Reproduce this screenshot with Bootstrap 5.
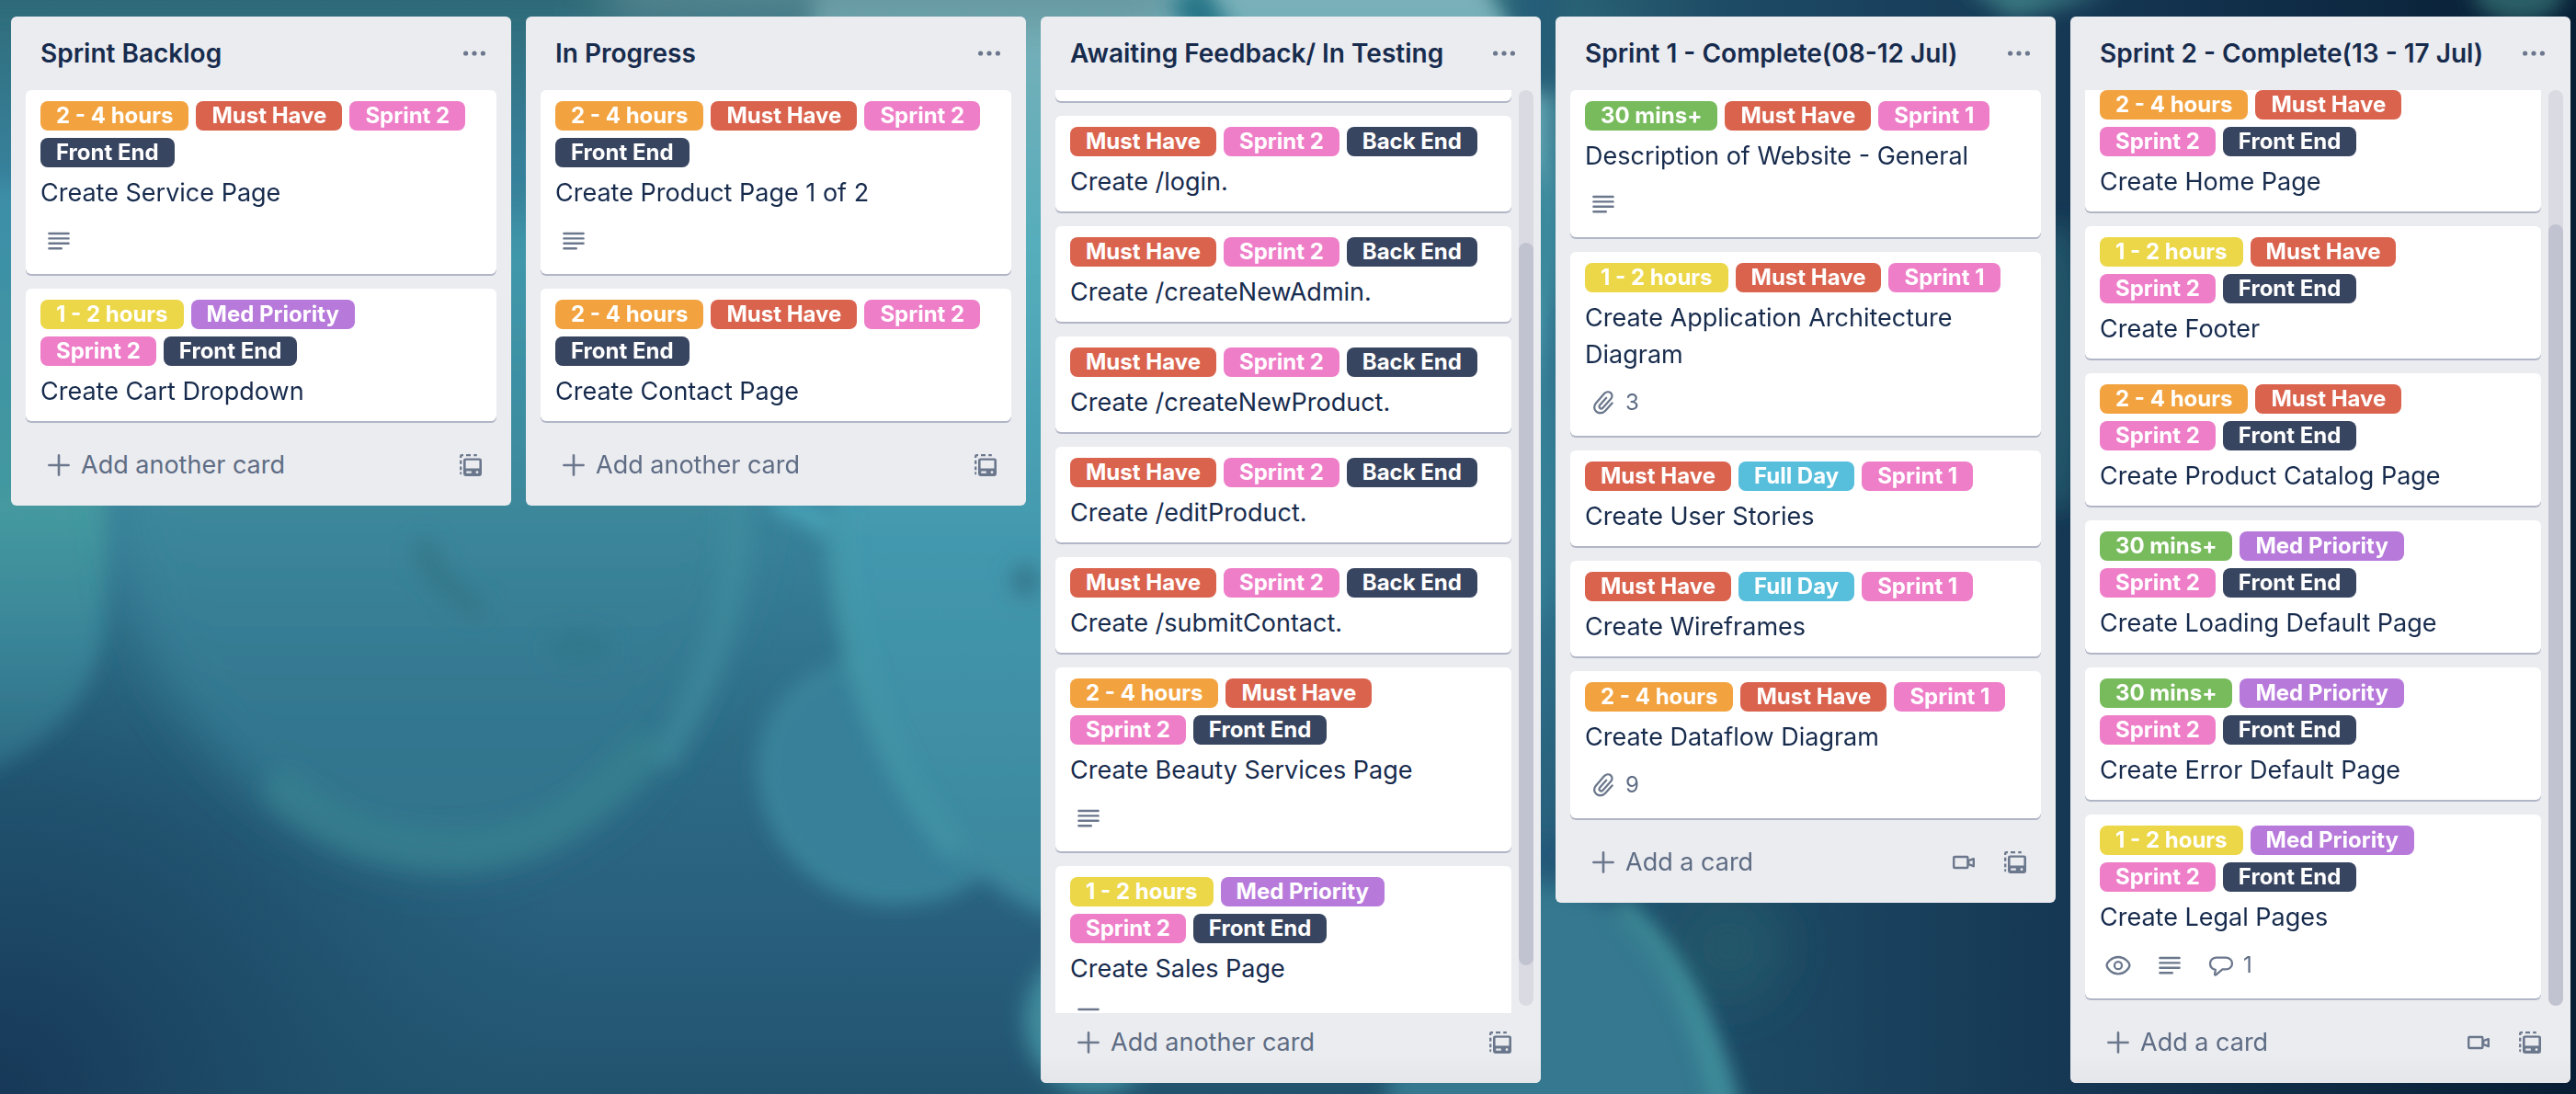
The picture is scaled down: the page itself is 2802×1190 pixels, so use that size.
<!DOCTYPE html>
<html lang="en">
<head>
<meta charset="utf-8">
<meta name="viewport" content="width=device-width, initial-scale=1">
<title>Sprint board</title>
<link href="https://cdn.jsdelivr.net/npm/bootstrap@5.3.0/dist/css/bootstrap.min.css" rel="stylesheet">
<style>
  :root { --ink: #172b4d; --muted-ink: #5e6c84; --icon: #6b778c; --list: #ebecf0; }
  body { font-family: Inter, "Noto Sans", sans-serif; font-size: 27px; line-height: 40px; color: var(--ink); background: #2a6480; }
  .scenery { position: fixed; inset: 0; z-index: -1; }
  .board { height: 100vh; padding: 18px 6px 12px 12px; gap: 16px; }
  .list { flex: 1 1 0; min-width: 0; max-height: 100%; background: var(--list); border-radius: 6px; }
  .list-head { flex: none; height: 80px; padding: 0 24px 0 32px; }
  .list-head h2 { font-size: 28px; line-height: 40px; font-weight: 600; }
  .list-body { min-height: 0; padding: 0 16px; }
  .stack { min-width: 0; min-height: 0; overflow: hidden; gap: 16px; padding-bottom: 16px; }
  .scrolls .list-body { padding-right: 8px; gap: 8px; }
  .list-foot { flex: none; height: 76px; padding: 0 28px 12px 36px; color: var(--muted-ink); border-radius: 0 0 6px 6px; }
  .scrolls .list-foot { background: linear-gradient(#ebecf0 60%, #e5e6ea); }
  .rail { flex: none; width: 16px; margin-bottom: 8px; border-radius: 8px; background: #dadbe2; }
  .thumb { border-radius: 8px; background: #c1c4d0; }
  .ticket { flex: none; border: 0; border-radius: 6px; padding: 12px 16px; background: #fff; box-shadow: 0 2px 0 #b1b6c6; color: var(--ink); }
  .cut-top { border-top-left-radius: 0; border-top-right-radius: 0; padding-top: 0; }
  .tag { height: 32px; margin: 0 8px 8px 0; padding: 0 17px; border-radius: 8px; font-size: 24px; line-height: 32px; font-weight: 700; color: #fff; white-space: nowrap; }
  .t-orange { background: #f2a340; } .t-red { background: #da634e; } .t-pink { background: #ee7ec8; }
  .t-navy { background: #384560; } .t-yellow { background: #ecd748; } .t-purple { background: #b77adb; }
  .t-green { background: #78bb5c; } .t-sky { background: #57bfdc; }
  .ticket a { color: inherit; }
  .facts { height: 40px; margin: 12px 0 4px 4px; gap: 24px; font-size: 24px; color: var(--muted-ink); }
  .glyph { width: 32px; height: 32px; flex: none; color: var(--icon); display: block; }
  .plain { border: 0; padding: 0; background: none; color: inherit; }
</style>
</head>
<body class="overflow-hidden">

<svg width="0" height="0" class="position-absolute" aria-hidden="true">
  <symbol id="i-dots" viewBox="0 0 32 32"><g fill="currentColor"><circle cx="6.6" cy="16" r="2.6"/><circle cx="16" cy="16" r="2.6"/><circle cx="25.4" cy="16" r="2.6"/></g></symbol>
  <symbol id="i-text" viewBox="0 0 32 32"><g stroke="currentColor" stroke-width="2.4" stroke-linecap="round"><path d="M5.4 8h21.2M5.4 13.4h21.2M5.4 18.8h21.2M5.4 24.2h13.4"/></g></symbol>
  <symbol id="i-plus" viewBox="0 0 32 32"><path d="M16 5.4v21.2M5.4 16h21.2" stroke="currentColor" stroke-width="2.6" stroke-linecap="round"/></symbol>
  <symbol id="i-clip" viewBox="0 0 32 32"><path d="M25.6 16.4l-7.4 8.3c-2.7 3-7.1 3.4-9.900 1-2.7-2.400-2.900-6.400-.3-9.300l9.100-10.300c1.900-2.100 5-2.400 6.900-.7 1.900 1.700 2 4.500.1 6.600l-8.500 9.500c-1 1.100-2.500 1.200-3.400.4-.9-.8-.9-2.200.1-3.300l6.900-7.800" fill="none" stroke="currentColor" stroke-width="2.3" stroke-linecap="round"/></symbol>
  <symbol id="i-eye" viewBox="0 0 32 32"><g fill="none" stroke="currentColor" stroke-width="2.3"><path d="M3.600 16C3.600 13 9 7 16 7S28.400 13 28.400 16 23 25.400 16 25.400 3.600 19 3.600 16z"/><circle cx="16" cy="16.200" r="4"/></g></symbol>
  <symbol id="i-talk" viewBox="0 0 32 32"><path d="M11 7.600h10c4.200 0 7 2.900 7 6.400s-2.800 6.400-7 6.400h-3.600l-6.700 5.800c-1.100.9-1.800.3-1.600-.8l.8-4.600C6 20.200 4 17.800 4 14c0-3.500 2.800-6.400 7-6.400z" fill="none" stroke="currentColor" stroke-width="2.3" stroke-linejoin="round"/></symbol>
  <symbol id="i-cam" viewBox="0 0 32 32"><g fill="none" stroke="currentColor" stroke-width="2.400" stroke-linejoin="round"><rect x="5.200" y="10" width="15.200" height="12" rx="1"/><path d="M21.200 14.200l5.600-2v8l-5.600-2z"/></g></symbol>
  <symbol id="i-tpl" viewBox="0 0 32 32"><path d="M10.400 8.400h15.200a2.400 2.400 0 0 1 2.400 2.400v14.800a2.400 2.400 0 0 1-2.400 2.400H10.400A2.400 2.400 0 0 1 8 25.600V10.800a2.400 2.400 0 0 1 2.400-2.400zm.2 2.400v8.800h14.800v-8.800zm.6 11.800v2.200h5.600v-2.200zm11.800-.3a1.400 1.400 0 1 0 0 2.800 1.400 1.400 0 0 0 0-2.800z" fill="currentColor" fill-rule="evenodd"/><path d="M5.200 8V6.200a1 1 0 0 1 1-1H8M11 5.200h5M19.200 5.200h3.600M5.200 10.800v4M5.200 17.600v3.600M5.200 23.600v.8a1 1 0 0 0 .8 1" fill="none" stroke="currentColor" stroke-width="2.300"/></symbol>
</svg>

<svg class="scenery w-100 h-100" viewBox="0 0 2802 1190" preserveAspectRatio="xMidYMid slice" aria-hidden="true">
  <defs>
    <filter id="soft" filterUnits="userSpaceOnUse" x="-100" y="-100" width="3002" height="1390"><feGaussianBlur stdDeviation="11"/></filter>
    <filter id="mist" filterUnits="userSpaceOnUse" x="-100" y="-100" width="3002" height="1390"><feGaussianBlur stdDeviation="26"/></filter>
    <linearGradient id="sea" x1="0" y1="0" x2="0" y2="1"><stop offset="0" stop-color="#2f6c7a"/><stop offset=".15" stop-color="#37809a"/><stop offset=".5" stop-color="#377f98"/><stop offset=".68" stop-color="#2d6b86"/><stop offset=".85" stop-color="#285f7d"/><stop offset="1" stop-color="#22536e"/></linearGradient>
    <radialGradient id="deep" gradientUnits="userSpaceOnUse" cx="0" cy="1190" r="640"><stop offset="0" stop-color="#173858"/><stop offset=".5" stop-color="#1d4c68" stop-opacity=".8"/><stop offset="1" stop-color="#225870" stop-opacity="0"/></radialGradient>
    <linearGradient id="night" x1="0" y1="0" x2="1" y2="0"><stop offset="0" stop-color="#1b4761" stop-opacity="0"/><stop offset=".2" stop-color="#1d4a65"/><stop offset=".5" stop-color="#153753"/><stop offset="1" stop-color="#061a30"/></linearGradient>
    <linearGradient id="bellA" x1="0" y1="0" x2="0" y2="1"><stop offset="0" stop-color="#409aac"/><stop offset=".45" stop-color="#3c879b"/><stop offset=".7" stop-color="#347991"/><stop offset="1" stop-color="#2f718a"/></linearGradient>
    <linearGradient id="bellB" x1="0" y1="0" x2="0" y2="1"><stop offset="0" stop-color="#7fb0b8"/><stop offset=".3" stop-color="#55adbb"/><stop offset=".6" stop-color="#4398ae"/><stop offset="1" stop-color="#3b859b"/></linearGradient>
    <linearGradient id="bellC" x1="0" y1="0" x2="0" y2="1"><stop offset="0" stop-color="#3c8ea8"/><stop offset=".55" stop-color="#44999f"/><stop offset=".75" stop-color="#3a8699"/><stop offset="1" stop-color="#2c6a82"/></linearGradient>
  </defs>
  <rect width="2802" height="1190" fill="url(#sea)"/>
  <rect width="2802" height="1190" fill="url(#deep)"/>
  <path d="M-40 200H100C125 420 120 600 112 690 100 760 60 810-40 850z" fill="url(#bellC)" filter="url(#soft)"/>
  <path d="M140 240C120 480 130 660 190 760 290 900 400 950 505 945 630 925 720 840 780 700 830 600 835 480 800 240z" fill="url(#bellA)" filter="url(#mist)"/>
  <path d="M310 860C370 910 430 925 505 925 590 918 640 880 700 820" fill="none" stroke="#378591" stroke-opacity=".6" stroke-width="46" stroke-linecap="round" filter="url(#soft)"/>
  <path d="M800 520C808 640 780 720 720 830" fill="none" stroke="#3f8f9f" stroke-opacity=".6" stroke-width="30" filter="url(#soft)"/>
  <path d="M462 600C472 630 495 645 515 660" fill="none" stroke="#34788a" stroke-opacity=".9" stroke-width="28" stroke-linecap="round" filter="url(#soft)"/>
  <ellipse cx="630" cy="705" rx="36" ry="22" fill="#33788c" filter="url(#soft)"/>
  <path d="M905 730C850 750 825 800 830 850 840 930 910 985 985 978 1030 975 1060 960 1080 930L960 700z" fill="#38809a" stroke="#3d8c9f" stroke-width="8" filter="url(#soft)"/>
  <path d="M890 -40C860 200 900 400 908 600 920 760 1000 900 1060 945 1110 990 1160 1010 1230 1010 1500 960 1700 700 1690 100L1600-40z" fill="url(#bellB)" filter="url(#soft)"/>
  <path d="M908 560C915 700 950 820 1040 930" fill="none" stroke="#46a0ab" stroke-opacity=".5" stroke-width="24" filter="url(#soft)"/>
  <path d="M840 540L905 572" stroke="#49a4b8" stroke-width="24" filter="url(#soft)"/>
  <ellipse cx="1115" cy="632" rx="16" ry="18" fill="#34788c" filter="url(#soft)"/>
  <ellipse cx="1190" cy="1110" rx="76" ry="80" fill="#3f8c9d" filter="url(#soft)"/>
  <path d="M-40 -30H760V8H-40z" fill="#2f6977" filter="url(#soft)"/>
  <path d="M660 -30H1280V18H660z" fill="#5f8e96" filter="url(#mist)"/>
  <path d="M1290 -10L1325 50" stroke="#287688" stroke-width="44" filter="url(#soft)"/>
  <path d="M1640 -20h60v120h-40z" fill="#27617a" filter="url(#soft)"/>
  <rect x="1640" y="-40" width="1240" height="1300" fill="url(#night)"/>
  <ellipse cx="1660" cy="260" rx="30" ry="80" fill="#38869a" filter="url(#soft)"/>
  <ellipse cx="1660" cy="540" rx="34" ry="140" fill="#358097" filter="url(#soft)"/>
  <ellipse cx="1690" cy="930" rx="24" ry="20" fill="#225678" filter="url(#soft)"/>
  <ellipse cx="1880" cy="1030" rx="60" ry="60" fill="#235769" filter="url(#mist)"/>
  <path d="M1560 960C1700 950 1760 975 1810 1040 1860 1100 1880 1150 1900 1230H1500z" fill="#35788f" filter="url(#soft)"/>
  <path d="M1760 985C1820 1030 1855 1110 1876 1210" fill="none" stroke="#43959f" stroke-width="18" filter="url(#soft)"/>
  <path d="M2130 -20L2190 20 2300 -10z" fill="#3a7a82" filter="url(#soft)"/>
  <ellipse cx="2240" cy="400" rx="26" ry="160" fill="#225569" filter="url(#soft)"/>
  <ellipse cx="2740" cy="-10" rx="50" ry="34" fill="#2a5f66" filter="url(#soft)"/>
</svg>

<main class="board d-flex align-items-start">

  <section class="list d-flex flex-column">
    <header class="list-head d-flex align-items-center justify-content-between">
      <h2 class="m-0 text-nowrap">Sprint Backlog</h2>
      <button class="plain" type="button" aria-label="List actions"><svg class="glyph"><use href="#i-dots"/></svg></button>
    </header>
    <div class="list-body d-flex">
      <div class="stack d-flex flex-column flex-grow-1">
        <article class="ticket card">
          <div class="d-flex flex-wrap"><span class="tag t-orange">2 - 4 hours</span><span class="tag t-red">Must Have</span><span class="tag t-pink">Sprint 2</span><span class="tag t-navy">Front End</span></div>
          <a href="#" class="text-decoration-none">Create Service Page</a>
          <div class="facts d-flex align-items-center"><svg class="glyph"><use href="#i-text"/></svg></div>
        </article>
        <article class="ticket card">
          <div class="d-flex flex-wrap"><span class="tag t-yellow">1 - 2 hours</span><span class="tag t-purple">Med Priority</span><span class="tag t-pink">Sprint 2</span><span class="tag t-navy">Front End</span></div>
          <a href="#" class="text-decoration-none">Create Cart Dropdown</a>
        </article>
      </div>
    </div>
    <footer class="list-foot d-flex align-items-center">
      <button class="plain d-flex align-items-center gap-2 me-auto" type="button"><svg class="glyph"><use href="#i-plus"/></svg>Add another card</button>
      <button class="plain" type="button" aria-label="Create from template"><svg class="glyph"><use href="#i-tpl"/></svg></button>
    </footer>
  </section>

  <section class="list d-flex flex-column">
    <header class="list-head d-flex align-items-center justify-content-between">
      <h2 class="m-0 text-nowrap">In Progress</h2>
      <button class="plain" type="button" aria-label="List actions"><svg class="glyph"><use href="#i-dots"/></svg></button>
    </header>
    <div class="list-body d-flex">
      <div class="stack d-flex flex-column flex-grow-1">
        <article class="ticket card">
          <div class="d-flex flex-wrap"><span class="tag t-orange">2 - 4 hours</span><span class="tag t-red">Must Have</span><span class="tag t-pink">Sprint 2</span><span class="tag t-navy">Front End</span></div>
          <a href="#" class="text-decoration-none">Create Product Page 1 of 2</a>
          <div class="facts d-flex align-items-center"><svg class="glyph"><use href="#i-text"/></svg></div>
        </article>
        <article class="ticket card">
          <div class="d-flex flex-wrap"><span class="tag t-orange">2 - 4 hours</span><span class="tag t-red">Must Have</span><span class="tag t-pink">Sprint 2</span><span class="tag t-navy">Front End</span></div>
          <a href="#" class="text-decoration-none">Create Contact Page</a>
        </article>
      </div>
    </div>
    <footer class="list-foot d-flex align-items-center">
      <button class="plain d-flex align-items-center gap-2 me-auto" type="button"><svg class="glyph"><use href="#i-plus"/></svg>Add another card</button>
      <button class="plain" type="button" aria-label="Create from template"><svg class="glyph"><use href="#i-tpl"/></svg></button>
    </footer>
  </section>

  <section class="list scrolls d-flex flex-column">
    <header class="list-head d-flex align-items-center justify-content-between">
      <h2 class="m-0 text-nowrap">Awaiting Feedback/ In Testing</h2>
      <button class="plain" type="button" aria-label="List actions"><svg class="glyph"><use href="#i-dots"/></svg></button>
    </header>
    <div class="list-body d-flex">
      <div class="stack d-flex flex-column flex-grow-1">
        <article class="ticket card cut-top"></article>
        <article class="ticket card">
          <div class="d-flex flex-wrap"><span class="tag t-red">Must Have</span><span class="tag t-pink">Sprint 2</span><span class="tag t-navy">Back End</span></div>
          <a href="#" class="text-decoration-none">Create /login.</a>
        </article>
        <article class="ticket card">
          <div class="d-flex flex-wrap"><span class="tag t-red">Must Have</span><span class="tag t-pink">Sprint 2</span><span class="tag t-navy">Back End</span></div>
          <a href="#" class="text-decoration-none">Create /createNewAdmin.</a>
        </article>
        <article class="ticket card">
          <div class="d-flex flex-wrap"><span class="tag t-red">Must Have</span><span class="tag t-pink">Sprint 2</span><span class="tag t-navy">Back End</span></div>
          <a href="#" class="text-decoration-none">Create /createNewProduct.</a>
        </article>
        <article class="ticket card">
          <div class="d-flex flex-wrap"><span class="tag t-red">Must Have</span><span class="tag t-pink">Sprint 2</span><span class="tag t-navy">Back End</span></div>
          <a href="#" class="text-decoration-none">Create /editProduct.</a>
        </article>
        <article class="ticket card">
          <div class="d-flex flex-wrap"><span class="tag t-red">Must Have</span><span class="tag t-pink">Sprint 2</span><span class="tag t-navy">Back End</span></div>
          <a href="#" class="text-decoration-none">Create /submitContact.</a>
        </article>
        <article class="ticket card">
          <div class="d-flex flex-wrap"><span class="tag t-orange">2 - 4 hours</span><span class="tag t-red">Must Have</span><span class="tag t-pink">Sprint 2</span><span class="tag t-navy">Front End</span></div>
          <a href="#" class="text-decoration-none">Create Beauty Services Page</a>
          <div class="facts d-flex align-items-center"><svg class="glyph"><use href="#i-text"/></svg></div>
        </article>
        <article class="ticket card">
          <div class="d-flex flex-wrap"><span class="tag t-yellow">1 - 2 hours</span><span class="tag t-purple">Med Priority</span><span class="tag t-pink">Sprint 2</span><span class="tag t-navy">Front End</span></div>
          <a href="#" class="text-decoration-none">Create Sales Page</a>
          <div class="facts d-flex align-items-center"><svg class="glyph"><use href="#i-text"/></svg></div>
        </article>
      </div>
      <div class="rail d-flex flex-column"><div style="height:16.7%"></div><div class="thumb" style="height:78.9%"></div></div>
    </div>
    <footer class="list-foot d-flex align-items-center">
      <button class="plain d-flex align-items-center gap-2 me-auto" type="button"><svg class="glyph"><use href="#i-plus"/></svg>Add another card</button>
      <button class="plain" type="button" aria-label="Create from template"><svg class="glyph"><use href="#i-tpl"/></svg></button>
    </footer>
  </section>

  <section class="list d-flex flex-column">
    <header class="list-head d-flex align-items-center justify-content-between">
      <h2 class="m-0 text-nowrap">Sprint 1 - Complete(08-12 Jul)</h2>
      <button class="plain" type="button" aria-label="List actions"><svg class="glyph"><use href="#i-dots"/></svg></button>
    </header>
    <div class="list-body d-flex">
      <div class="stack d-flex flex-column flex-grow-1">
        <article class="ticket card">
          <div class="d-flex flex-wrap"><span class="tag t-green">30 mins+</span><span class="tag t-red">Must Have</span><span class="tag t-pink">Sprint 1</span></div>
          <a href="#" class="text-decoration-none">Description of Website - General</a>
          <div class="facts d-flex align-items-center"><svg class="glyph"><use href="#i-text"/></svg></div>
        </article>
        <article class="ticket card">
          <div class="d-flex flex-wrap"><span class="tag t-yellow">1 - 2 hours</span><span class="tag t-red">Must Have</span><span class="tag t-pink">Sprint 1</span></div>
          <a href="#" class="text-decoration-none">Create Application Architecture Diagram</a>
          <div class="facts d-flex align-items-center"><span class="d-flex align-items-center gap-2"><svg class="glyph"><use href="#i-clip"/></svg>3</span></div>
        </article>
        <article class="ticket card">
          <div class="d-flex flex-wrap"><span class="tag t-red">Must Have</span><span class="tag t-sky">Full Day</span><span class="tag t-pink">Sprint 1</span></div>
          <a href="#" class="text-decoration-none">Create User Stories</a>
        </article>
        <article class="ticket card">
          <div class="d-flex flex-wrap"><span class="tag t-red">Must Have</span><span class="tag t-sky">Full Day</span><span class="tag t-pink">Sprint 1</span></div>
          <a href="#" class="text-decoration-none">Create Wireframes</a>
        </article>
        <article class="ticket card">
          <div class="d-flex flex-wrap"><span class="tag t-orange">2 - 4 hours</span><span class="tag t-red">Must Have</span><span class="tag t-pink">Sprint 1</span></div>
          <a href="#" class="text-decoration-none">Create Dataflow Diagram</a>
          <div class="facts d-flex align-items-center"><span class="d-flex align-items-center gap-2"><svg class="glyph"><use href="#i-clip"/></svg>9</span></div>
        </article>
      </div>
    </div>
    <footer class="list-foot d-flex align-items-center gap-4">
      <button class="plain d-flex align-items-center gap-2 me-auto" type="button"><svg class="glyph"><use href="#i-plus"/></svg>Add a card</button>
      <button class="plain" type="button" aria-label="Record a video"><svg class="glyph"><use href="#i-cam"/></svg></button>
      <button class="plain" type="button" aria-label="Create from template"><svg class="glyph"><use href="#i-tpl"/></svg></button>
    </footer>
  </section>

  <section class="list scrolls d-flex flex-column">
    <header class="list-head d-flex align-items-center justify-content-between">
      <h2 class="m-0 text-nowrap">Sprint 2 - Complete(13 - 17 Jul)</h2>
      <button class="plain" type="button" aria-label="List actions"><svg class="glyph"><use href="#i-dots"/></svg></button>
    </header>
    <div class="list-body d-flex">
      <div class="stack d-flex flex-column flex-grow-1">
        <article class="ticket card cut-top">
          <div class="d-flex flex-wrap"><span class="tag t-orange">2 - 4 hours</span><span class="tag t-red">Must Have</span><span class="tag t-pink">Sprint 2</span><span class="tag t-navy">Front End</span></div>
          <a href="#" class="text-decoration-none">Create Home Page</a>
        </article>
        <article class="ticket card">
          <div class="d-flex flex-wrap"><span class="tag t-yellow">1 - 2 hours</span><span class="tag t-red">Must Have</span><span class="tag t-pink">Sprint 2</span><span class="tag t-navy">Front End</span></div>
          <a href="#" class="text-decoration-none">Create Footer</a>
        </article>
        <article class="ticket card">
          <div class="d-flex flex-wrap"><span class="tag t-orange">2 - 4 hours</span><span class="tag t-red">Must Have</span><span class="tag t-pink">Sprint 2</span><span class="tag t-navy">Front End</span></div>
          <a href="#" class="text-decoration-none">Create Product Catalog Page</a>
        </article>
        <article class="ticket card">
          <div class="d-flex flex-wrap"><span class="tag t-green">30 mins+</span><span class="tag t-purple">Med Priority</span><span class="tag t-pink">Sprint 2</span><span class="tag t-navy">Front End</span></div>
          <a href="#" class="text-decoration-none">Create Loading Default Page</a>
        </article>
        <article class="ticket card">
          <div class="d-flex flex-wrap"><span class="tag t-green">30 mins+</span><span class="tag t-purple">Med Priority</span><span class="tag t-pink">Sprint 2</span><span class="tag t-navy">Front End</span></div>
          <a href="#" class="text-decoration-none">Create Error Default Page</a>
        </article>
        <article class="ticket card">
          <div class="d-flex flex-wrap"><span class="tag t-yellow">1 - 2 hours</span><span class="tag t-purple">Med Priority</span><span class="tag t-pink">Sprint 2</span><span class="tag t-navy">Front End</span></div>
          <a href="#" class="text-decoration-none">Create Legal Pages</a>
          <div class="facts d-flex align-items-center"><svg class="glyph"><use href="#i-eye"/></svg><svg class="glyph"><use href="#i-text"/></svg><span class="d-flex align-items-center gap-2"><svg class="glyph"><use href="#i-talk"/></svg>1</span></div>
        </article>
      </div>
      <div class="rail d-flex flex-column justify-content-end"><div class="thumb" style="height:85.3%"></div></div>
    </div>
    <footer class="list-foot d-flex align-items-center gap-4">
      <button class="plain d-flex align-items-center gap-2 me-auto" type="button"><svg class="glyph"><use href="#i-plus"/></svg>Add a card</button>
      <button class="plain" type="button" aria-label="Record a video"><svg class="glyph"><use href="#i-cam"/></svg></button>
      <button class="plain" type="button" aria-label="Create from template"><svg class="glyph"><use href="#i-tpl"/></svg></button>
    </footer>
  </section>
</main>

<script src="https://cdn.jsdelivr.net/npm/bootstrap@5.3.0/dist/js/bootstrap.bundle.min.js"></script>
</body>
</html>
